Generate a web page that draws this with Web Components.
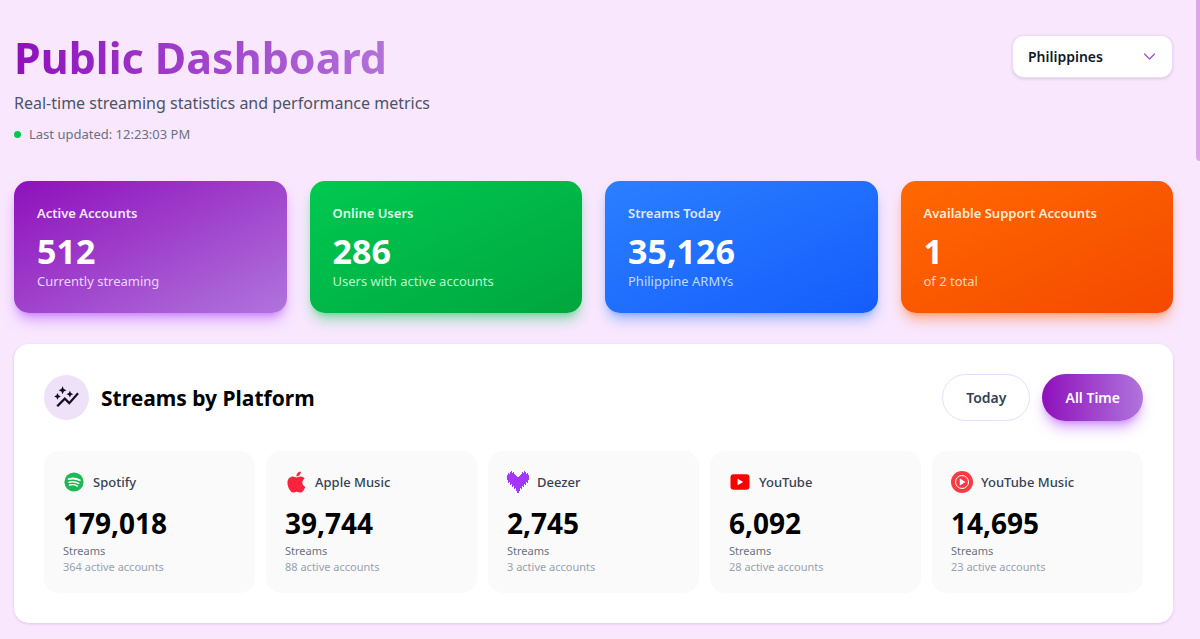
<!DOCTYPE html>
<html lang="en">
<head>
<meta charset="utf-8">
<title>Public Dashboard</title>
<style>
  body {
    margin: 0;
    min-height: 100vh;
    background: #f9e7fe;
    color: #000;
    font-family: "Segoe UI", "Noto Sans", sans-serif;
  }
</style>
</head>
<body>

<public-dashboard></public-dashboard>

<template id="public-dashboard">
  <style>
    :host {
      display: block;
      padding: 35px 27px 14px 14px;
    }

    .cards {
      display: grid;
      grid-template-columns: repeat(4, 1fr);
      gap: 23px;
      margin: 38px 0 31px;
    }

    .thumb {
      position: fixed;
      top: 0;
      right: 0;
      width: 4px;
      height: 161px;
      border-radius: 0 0 0 4px;
      background: #dba6ea;
    }
  </style>

  <page-header time="12:23:03 PM">Public Dashboard</page-header>
  <main>
    <section class="cards">
      <stat-card tone="purple" value="512" note="Currently streaming">Active Accounts</stat-card>
      <stat-card tone="green" value="286" note="Users with active accounts">Online Users</stat-card>
      <stat-card tone="blue" value="35,126" note="Philippine ARMYs">Streams Today</stat-card>
      <stat-card tone="orange" value="1" note="of 2 total">Available Support Accounts</stat-card>
    </section>
    <platform-panel></platform-panel>
  </main>
  <div class="thumb"></div>
</template>

<template id="page-header">
  <style>
    :host {
      display: flex;
      justify-content: space-between;
      align-items: flex-start;
    }

    .text {
      display: flex;
      flex-direction: column;
      gap: 8px;
    }

    h1 {
      margin: 0;
      font-size: 43px;
      line-height: 46px;
      font-weight: 700;
      background: linear-gradient(to right, #8f10bc, #b57edc);
      -webkit-background-clip: text;
      background-clip: text;
      color: transparent;
    }

    p {
      margin: 0;
      font-size: 16px;
      line-height: 28px;
      color: #4a5565;
    }

    .updated {
      display: flex;
      align-items: center;
      gap: 8px;
      font-size: 13px;
      line-height: 18px;
      color: #6a7282;
    }

    .dot {
      width: 7px;
      height: 7px;
      border-radius: 50%;
      background: #00c950;
    }
  </style>
  <div class="text">
    <h1><slot></slot></h1>
    <p>Real-time streaming statistics and performance metrics</p>
    <div class="updated"><span class="dot"></span><span class="time"></span></div>
  </div>
  <country-select></country-select>
</template>

<template id="country-select">
  <style>
    :host {
      display: inline-grid;
      align-items: center;
      width: 161px;
    }

    select, svg {
      grid-area: 1 / 1;
    }

    select {
      appearance: none;
      -webkit-appearance: none;
      width: 100%;
      height: 43px;
      padding: 0 40px 0 15px;
      border: 1px solid #eedcfb;
      border-radius: 12px;
      background: #fff;
      box-shadow: 0 1px 3px rgba(0, 0, 0, 0.14);
      color: #101828;
      font: 600 14px "Segoe UI", "Noto Sans", sans-serif;
    }

    svg {
      justify-self: end;
      margin-right: 16px;
      pointer-events: none;
    }
  </style>
  <select aria-label="Country">
    <option>Philippines</option>
  </select>
  <svg width="15" height="15" viewBox="0 0 24 24" fill="none" stroke="#a24fd0" stroke-width="2" stroke-linecap="round" stroke-linejoin="round"><path d="M4 8l8 8 8-8"/></svg>
</template>

<template id="stat-card">
  <style>
    :host {
      display: block;
      padding: 22px 23px;
      border-radius: 15px;
      background: linear-gradient(to bottom right, var(--from), var(--to));
      box-shadow: 0 9px 14px -3px var(--shadow), 0 4px 6px -4px var(--shadow);
    }

    :host([tone="purple"]) { --from: #8f10bc; --to: #b074dc; --shadow: rgba(173, 70, 255, 0.5); --label: #f3e8ff; --note: #e9d4ff; }
    :host([tone="green"]) { --from: #00c950; --to: #00a63e; --shadow: rgba(0, 201, 80, 0.45); --label: #dcfce7; --note: #b9f8cf; }
    :host([tone="blue"]) { --from: #2b7fff; --to: #155dfc; --shadow: rgba(43, 127, 255, 0.45); --label: #dbeafe; --note: #bedbff; }
    :host([tone="orange"]) { --from: #ff6900; --to: #f54900; --shadow: rgba(255, 105, 0, 0.45); --label: #ffedd4; --note: #ffd6a8; }

    h2 {
      margin: 0 0 8px;
      font-size: 13px;
      line-height: 20px;
      font-weight: 600;
      color: var(--label);
    }

    .value {
      font-size: 34px;
      line-height: 40px;
      font-weight: 700;
      color: #fff;
    }

    .note {
      font-size: 13px;
      line-height: 20px;
      color: var(--note);
    }
  </style>
  <h2><slot></slot></h2>
  <div class="value"></div>
  <div class="note"></div>
</template>

<template id="platform-panel">
  <style>
    :host {
      display: block;
      padding: 30px;
      border-radius: 15px;
      background: #fff;
      box-shadow: 0 1px 3px rgba(130, 60, 170, 0.2);
    }

    header {
      display: flex;
      align-items: center;
      gap: 12px;
      margin-bottom: 30px;
    }

    .badge {
      display: grid;
      place-items: center;
      width: 45px;
      height: 45px;
      border-radius: 50%;
      background: #efe2f8;
    }

    h2 {
      flex: 1;
      margin: 0;
      font-size: 21px;
      line-height: 30px;
      font-weight: 700;
    }

    button {
      height: 47px;
      padding: 0 23px;
      border: 1px solid #eadcfb;
      border-radius: 24px;
      background: #fff;
      color: #364153;
      font: 600 14px "Segoe UI", "Noto Sans", sans-serif;
    }

    button.active {
      border: 0;
      background: linear-gradient(to right, #8f10bc, #b074dc);
      box-shadow: 0 9px 14px -3px rgba(173, 70, 255, 0.5), 0 4px 6px -4px rgba(173, 70, 255, 0.5);
      color: #fff;
    }

    .tiles {
      display: grid;
      grid-template-columns: repeat(5, 1fr);
      gap: 11px;
    }
  </style>
  <header>
    <span class="badge">
      <svg width="27" height="27" viewBox="0 0 24 24" fill="#160c20"><path d="M14.06 9.94L12 9l2.06-.94L15 6l.94 2.06L18 9l-2.06.94L15 12l-.94-2.06zM4 14l.94-2.06L7 11l-2.06-.94L4 8l-.94 2.06L1 11l2.06.94L4 14zM8.5 9l1.09-2.41L12 5.5 9.59 4.41 8.5 2 7.41 4.41 5 5.5l2.41 1.09L8.5 9zM4.5 20.5l6-6.01 4 4L23 8.93l-1.41-1.41-7.09 7.97-4-4L3 19l1.5 1.5z"/></svg>
    </span>
    <h2>Streams by Platform</h2>
    <button type="button">Today</button>
    <button type="button" class="active">All Time</button>
  </header>
  <div class="tiles">
    <platform-tile name="Spotify" streams="179,018" accounts="364">
      <svg width="22" height="22" viewBox="0 0 22 22" fill="none" stroke="#fff" stroke-linecap="round"><circle cx="11" cy="11" r="9.6" fill="#1db954" stroke="none"/><path stroke-width="1.8" d="M5.6 8.2c3.8-1.1 7.9-.8 11.2 1.1"/><path stroke-width="1.5" d="M6.1 11.2c3.3-.9 6.600-.5 9.600 1.200"/><path stroke-width="1.3" d="M6.6 14c2.8-.6 5.4-.3 7.9 1.1"/></svg>
    </platform-tile>
    <platform-tile name="Apple Music" streams="39,744" accounts="88">
      <svg width="22" height="22" viewBox="-12 24 464 464" fill="#fa233b"><path d="M318.7 268.7c-.2-36.7 16.4-64.4 50-84.8-18.8-26.9-47.2-41.7-84.7-44.6-35.5-2.8-74.3 20.7-88.5 20.7-15 0-49.4-19.7-76.4-19.7C63.3 141.2 4 184.8 4 273.5q0 39.3 14.4 81.2c12.8 36.7 59 126.7 107.2 125.2 25.2-.6 43-17.9 75.8-17.9 31.8 0 48.3 17.9 76.4 17.9 48.6-.7 90.4-82.5 102.6-119.3-65.2-30.7-61.7-90-61.700-91.900zm-56.600-164.200c27.300-32.400 24.800-61.900 24-72.500-24.100 1.400-52 16.400-67.900 34.900-17.500 19.800-27.800 44.300-25.600 71.900 26.100 2 49.900-11.400 69.500-34.300z" transform="translate(36 0)"/></svg>
    </platform-tile>
    <platform-tile name="Deezer" streams="2,745" accounts="3">
      <svg width="22" height="22" viewBox="0 0 22 22" fill="#a238ff"><path d="M0 4V9H1V12H2V11H3V14H4V13H5V16H6V15H7V18H8V17H9V20H10V22H12V20H13V17H14V18H15V15H16V16H17V13H18V14H19V11H20V12H21V9H22V4H21V2H20V3H19V1H18V0H17V2H16V1H15V3H14V4H13V5H12V6H10V5H9V4H8V3H7V1H6V2H5V0H4V1H3V3H2V2H1V4z"/></svg>
    </platform-tile>
    <platform-tile name="YouTube" streams="6,092" accounts="28">
      <svg width="22" height="22" viewBox="0 0 22 22"><rect x="1.5" y="3.2" width="19" height="15.6" rx="3.2" fill="#f00"/><path fill="#fff" d="M8.600 7.800v6.400l5.600-3.200z"/></svg>
    </platform-tile>
    <platform-tile name="YouTube Music" streams="14,695" accounts="23">
      <svg width="22" height="22" viewBox="0 0 22 22"><circle cx="11" cy="11" r="11" fill="#f93a45"/><circle cx="11" cy="11" r="6.5" fill="none" stroke="#fff" stroke-width="1"/><path fill="#fff" d="M8.800 7.600v6.800l5.700-3.400z"/></svg>
    </platform-tile>
  </div>
</template>

<template id="platform-tile">
  <style>
    :host {
      display: block;
      padding: 18px 19px;
      border-radius: 15px;
      background: #fafafa;
    }

    .name {
      display: flex;
      align-items: center;
      gap: 8px;
      height: 26px;
      margin-bottom: 10px;
    }

    h3 {
      margin: 0;
      font-size: 13px;
      line-height: 20px;
      font-weight: 500;
      color: #364153;
    }

    .streams {
      margin-bottom: 2px;
      font-size: 28px;
      line-height: 36px;
      font-weight: 700;
    }

    .label, .accounts {
      font-size: 11px;
      line-height: 16px;
      color: #6a7282;
    }

    .accounts {
      color: #99a1af;
    }
  </style>
  <div class="name"><slot></slot><h3></h3></div>
  <div class="streams"></div>
  <div class="label">Streams</div>
  <div class="accounts"></div>
</template>

<script>

/**
 * Base class, clones the template that has the same id as the tag name into an open shadow root
 */
class TemplateElement extends HTMLElement {
  constructor() {
    super();
    const template = document.getElementById(this.localName);
    this.attachShadow({mode: 'open'}).appendChild(template.content.cloneNode(true));
  }

  /**
   * Sets the text of the first element in the shadow root that matches the selector
   * @param {String} selector
   * @param {String} text
   */
  setText(selector, text){
    this.shadowRoot.querySelector(selector).textContent = text;
  }
}

class CountrySelect extends TemplateElement {}

class PageHeader extends TemplateElement {
  connectedCallback(){
    this.setText('.time', `Last updated: ${this.getAttribute('time')}`);
  }
}

class StatCard extends TemplateElement {
  connectedCallback(){
    this.setText('.value', this.getAttribute('value'));
    this.setText('.note', this.getAttribute('note'));
  }
}

class PlatformTile extends TemplateElement {
  connectedCallback(){
    this.setText('h3', this.getAttribute('name'));
    this.setText('.streams', this.getAttribute('streams'));
    this.setText('.accounts', `${this.getAttribute('accounts')} active accounts`);
  }
}

class PlatformPanel extends TemplateElement {
  connectedCallback(){
    const buttons = this.shadowRoot.querySelectorAll('button');
    buttons.forEach(button => {
      button.addEventListener('click', () => {
        buttons.forEach(b => b.classList.toggle('active', b === button));
      });
    });
  }
}

class PublicDashboard extends TemplateElement {}

customElements.define('country-select', CountrySelect);
customElements.define('page-header', PageHeader);
customElements.define('stat-card', StatCard);
customElements.define('platform-tile', PlatformTile);
customElements.define('platform-panel', PlatformPanel);
customElements.define('public-dashboard', PublicDashboard);

</script>
</body>
</html>
